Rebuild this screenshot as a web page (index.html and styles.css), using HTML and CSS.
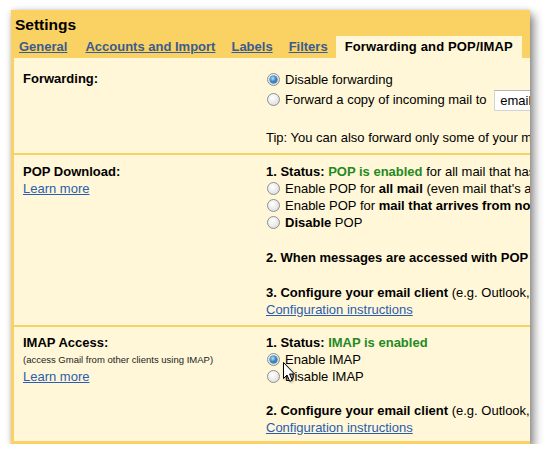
FILE: index.html
```html
<!DOCTYPE html>
<html>
<head>
<meta charset="utf-8">
<link rel="stylesheet" href="styles.css">
</head>
<body>
<div class="panel">
  <div class="head">
    <div class="title">Settings</div>
    <div class="tabs">
      <a class="tab tab-first" href="#">General</a>
      <a class="tab" href="#">Accounts and Import</a>
      <a class="tab" href="#">Labels</a>
      <a class="tab" href="#">Filters</a>
      <span class="tab active">Forwarding and POP/IMAP</span>
    </div>
  </div>
  <div class="content">
    <section class="row row-fwd">
      <div class="label"><b>Forwarding:</b></div>
      <div class="opts">
        <div class="line"><span class="radio on"></span>Disable forwarding</div>
        <div class="line line-input"><span class="radio"></span>Forward a copy of incoming mail to <span class="input">email address</span></div>
        <div class="line para">Tip: You can also forward only some of your mail by creating a filter!</div>
      </div>
    </section>
    <section class="row row-pop">
      <div class="label">
        <div class="line"><b>POP Download:</b></div>
        <div class="line"><a class="link" href="#">Learn more</a></div>
      </div>
      <div class="opts">
        <div class="line"><b>1. Status: <span class="green">POP is enabled</span></b> for all mail that has arrived since 5/5/09</div>
        <div class="line"><span class="radio"></span>Enable POP for <b>all mail</b> (even mail that's already been downloaded)</div>
        <div class="line"><span class="radio"></span>Enable POP for <b>mail that arrives from now on</b></div>
        <div class="line"><span class="radio"></span><b>Disable</b> POP</div>
        <div class="line para"><b>2. When messages are accessed with POP</b></div>
        <div class="line para"><b>3. Configure your email client</b> (e.g. Outlook, Eudora, Netscape Mail)</div>
        <div class="line"><a class="link" href="#">Configuration instructions</a></div>
      </div>
    </section>
    <section class="row row-imap">
      <div class="label">
        <div class="line"><b>IMAP Access:</b></div>
        <div class="line small">(access Gmail from other clients using IMAP)</div>
        <div class="line"><a class="link" href="#">Learn more</a></div>
      </div>
      <div class="opts">
        <div class="line"><b>1. Status: <span class="green">IMAP is enabled</span></b></div>
        <div class="line"><span class="radio on"></span>Enable IMAP</div>
        <div class="line"><span class="radio"></span>Disable IMAP</div>
        <div class="line para2"><b>2. Configure your email client</b> (e.g. Outlook, Thunderbird, iPhone)</div>
        <div class="line"><a class="link" href="#">Configuration instructions</a></div>
      </div>
    </section>
  </div>
  <svg class="cursor" width="14" height="22" viewBox="0 0 14 22">
    <path d="M1.5 1.5 L1.5 17.5 L5 14 L7.7 20.3 L10.2 19.2 L7.6 13 L12.5 13 Z" fill="#fff" stroke="#000" stroke-width="1" stroke-linejoin="miter"/>
  </svg>
</div>
</body>
</html>
```

FILE: styles.css
```css
html, body {
  margin: 0;
  padding: 0;
  background: #ffffff;
}

body {
  padding: 10px 0 0 11px;
  font-family: "Liberation Sans", Arial, sans-serif;
  font-size: 13px;
  color: #000;
}

.panel {
  position: relative;
  width: 519px;
  background: #fad163;
  box-shadow: 4px 5px 9px rgba(0, 0, 0, 0.45), 0 0 5px rgba(0, 0, 0, 0.15);
  overflow: hidden;
  white-space: nowrap;
}

.head {
  background: #fad163;
}

.title {
  padding: 3px 0 0 4px;
  height: 23px;
  line-height: 23px;
  font-size: 15.5px;
  font-weight: bold;
}

.tabs {
  display: flex;
  height: 22px;
  line-height: 22px;
  font-weight: bold;
}

.tab {
  padding: 0 8px;
  color: #3a5c8f;
  text-decoration: underline;
}

.tab-first {
  padding-right: 10px;
}

.tab.active {
  color: #000;
  text-decoration: none;
  background: #fff7d7;
  padding: 0 9px 0 9px;
  letter-spacing: 0.15px;
}

.content {
  margin: 0 0 0 3px;
  border-bottom: 3px solid #fad163;
  background: #fff7d7;
}

.row {
  display: grid;
  grid-template-columns: 252px 1fr;
  border-top: 2px solid #fad163;
}

.row-fwd {
  border-top: 0;
  padding: 13px 0 7px;
}

.row-pop {
  padding: 8px 0 7px;
}

.row-imap {
  padding: 7px 0 5px;
}

.label {
  padding-left: 9px;
}

.line {
  height: 17px;
  line-height: 17px;
}

.line-input {
  height: 23px;
  line-height: 23px;
}

.para {
  margin-top: 18px;
}

.para2 {
  margin-top: 17px;
}

.small {
  font-size: 9.5px;
  color: #222;
}

.opts {
  overflow: hidden;
}

.green {
  color: #1f8a1f;
}

.link {
  color: #2a5db0;
  text-decoration: underline;
}

.radio {
  display: inline-block;
  box-sizing: border-box;
  width: 13px;
  height: 13px;
  margin: 0 5px 0 1px;
  vertical-align: -2px;
  border-radius: 50%;
  border: 1px solid #8d9092;
  background: radial-gradient(circle at 40% 35%, #ffffff 0%, #eeeeee 45%, #cfd1d3 100%);
  position: relative;
}

.radio.on::after {
  content: "";
  position: absolute;
  left: 2px;
  top: 2px;
  width: 7px;
  height: 7px;
  border-radius: 50%;
  background: radial-gradient(circle at 40% 35%, #b8e4fb 0%, #3d8fd0 45%, #17508f 100%);
  box-shadow: 0 0 0 0.5px #1b4f7e;
}

.input {
  display: inline-block;
  box-sizing: border-box;
  height: 21px;
  line-height: 19px;
  width: 150px;
  padding: 0 5px;
  margin-left: 4px;
  vertical-align: middle;
  background: #ffffff;
  border: 1px solid #d3d3d3;
  border-top-color: #b5b5b5;
}

.cursor {
  position: absolute;
  left: 271px;
  top: 351px;
  filter: drop-shadow(1px 1px 1px rgba(0, 0, 0, 0.35));
}
```
